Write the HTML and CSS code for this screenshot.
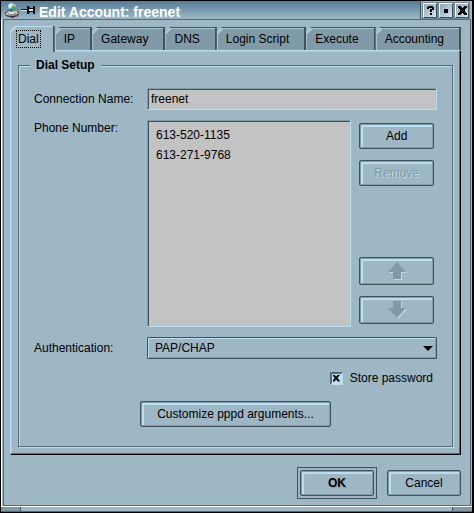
FILE: index.html
```html
<!DOCTYPE html>
<html lang="en">
<head>
    <meta charset="utf-8">
    <title>Edit Account: freenet</title>
    <link rel="stylesheet" href="styles.css">
</head>
<body>
    <div class="window">
        <header class="titlebar">
            <svg class="app-icon" width="17" height="17" viewBox="0 0 17 17" aria-hidden="true">
                <path d="M0 11L5 7L13 9L14 13L8 16L1 14Z" fill="#333"/>
                <path d="M1 11L5 8L12 9L13 12L8 14L1 13Z" fill="#c9c9c1"/>
                <path d="M2 11L7 10L12 12L7 14Z" fill="#89877f"/>
                <circle cx="7" cy="5" r="5" fill="#608fa8"/>
                <path d="M3 3L6 1L8 2L7 5L4 7Z" fill="#d8f5f5"/>
                <path d="M8 1L11 4L9 5Z" fill="#e8dd58"/>
                <path d="M7 6L11 5L10 8L7 9Z" fill="#49a55a"/>
                <path d="M4 7L7 7L7 10L4 9Z" fill="#5262ae"/>
                <path d="M3 10H9V12H5Z" fill="#e8e8e0"/>
                <path d="M10 14H13" stroke="#b84437"/>
            </svg>
            <svg class="pin" width="15" height="10" viewBox="0 0 15 10" aria-hidden="true" shape-rendering="crispEdges">
                <path d="M0 4H6V5H0ZM6 1H8V2H9V3H12V1H14V9H12V7H9V8H8V9H6Z" fill="#111"/>
                <path d="M0 5H6V6H0ZM8 4H12V6H8Z" fill="#dbe7ec"/>
            </svg>
            <h1>Edit Account: freenet</h1>
            <div class="window-buttons">
                <button type="button" aria-label="Help">
                    <svg width="9" height="9" viewBox="0 0 9 9" shape-rendering="crispEdges"><path d="M2 0H7V1H8V4H6V6H4V3H6V2H3V3H1V1H2ZM4 7H6V9H4Z"/></svg>
                </button>
                <button type="button" aria-label="Maximize">
                    <svg width="9" height="9" viewBox="0 0 9 9"><path d="M2 3H6V7H2Z"/></svg>
                </button>
                <button type="button" aria-label="Close">
                    <svg width="9" height="9" viewBox="0 0 9 9" shape-rendering="crispEdges"><path d="M0 0H3V1H4V2H5V1H6V0H9V2H8V3H7V6H8V7H9V9H6V8H5V7H4V8H3V9H0V7H1V6H2V3H1V2H0Z"/></svg>
                </button>
            </div>
        </header>

        <main class="dialog">
            <nav class="tabs" role="tablist">
                <button type="button" class="tab active" role="tab" aria-selected="true"><span>Dial</span></button>
                <button type="button" class="tab" role="tab">IP</button>
                <button type="button" class="tab" role="tab">Gateway</button>
                <button type="button" class="tab" role="tab">DNS</button>
                <button type="button" class="tab" role="tab">Login Script</button>
                <button type="button" class="tab" role="tab">Execute</button>
                <button type="button" class="tab" role="tab">Accounting</button>
            </nav>

            <form class="panel" id="accountForm">
                <fieldset>
                    <legend>Dial Setup</legend>
                    <div class="fields">
                        <label for="connectionName">Connection Name:</label>
                        <input type="text" id="connectionName" value="freenet">

                        <label for="phoneNumber" class="top-label">Phone Number:</label>
                        <div class="phone">
                            <select id="phoneNumber" class="phone-list" size="9">
                                <option>613-520-1135</option>
                                <option>613-271-9768</option>
                            </select>
                            <div class="phone-buttons">
                                <button type="button" class="btn">Add</button>
                                <button type="button" class="btn" disabled>Remove</button>
                                <button type="button" class="btn arrow up" disabled aria-label="Move up">
                                    <svg width="20" height="18" viewBox="0 0 20 18"><path d="M11 2L20 11H15V18H7V11H2Z" fill="#b9def0"/><path d="M10 0L19 10H14V17H6V10H1Z" fill="#819aa7"/></svg>
                                </button>
                                <button type="button" class="btn arrow" disabled aria-label="Move down">
                                    <svg width="20" height="18" viewBox="0 0 20 18"><path d="M7 1H15V8H20L11 18L2 8H7Z" fill="#b9def0"/><path d="M6 0H14V7H19L10 17L1 7H6Z" fill="#819aa7"/></svg>
                                </button>
                            </div>
                        </div>

                        <label for="authentication">Authentication:</label>
                        <div class="combo">
                            <select id="authentication">
                                <option>PAP/CHAP</option>
                            </select>
                        </div>
                    </div>
                    <div class="store">
                        <input type="checkbox" id="storePassword" checked>
                        <label for="storePassword">Store password</label>
                    </div>
                    <button type="button" class="btn customize">Customize pppd arguments...</button>
                </fieldset>
            </form>

            <div class="actions">
                <div class="default-frame">
                    <button type="submit" form="accountForm" class="btn ok">OK</button>
                </div>
                <button type="button" class="btn">Cancel</button>
            </div>
        </main>
        <div class="grip"><span></span><span></span></div>
    </div>
</body>
</html>
```
FILE: styles.css
```css
* {
    box-sizing: border-box;
}
body {
    margin: 0;
    background-color: #000;
    color: #000;
}
body, button, input, select {
    font-family: "Liberation Sans", Arial, sans-serif;
    font-size: 12px;
    line-height: 14px;
}
.window {
    min-height: 100vh;
    display: flex;
    flex-direction: column;
    border: 1px solid #000;
    border-right-width: 2px;
    background-color: #9db7c5;
}
.titlebar {
    display: flex;
    align-items: center;
    height: 18px;
    padding-left: 4px;
    background: linear-gradient(#547b96, #9db9c8);
}
.pin {
    margin-left: -1px;
}
.titlebar h1 {
    flex: 1;
    margin: 0 0 0 3px;
    padding-top: 3px;
    font-size: 14px;
    line-height: 16px;
    color: #fff;
}
.window-buttons {
    display: flex;
    gap: 2px;
    padding: 2px 3px 0 2px;
    height: 18px;
    border-left: 1px solid #41525c;
    background-color: #9db7c5;
}
.window-buttons button {
    display: flex;
    align-items: center;
    justify-content: center;
    width: 14px;
    height: 15px;
    padding: 0;
    border: 1px solid;
    border-color: #fff #41525c #41525c #fff;
    background: linear-gradient(135deg, #8ba6b5, #d2e6f0);
    box-shadow: 0 0 0 1px #70889a;
}
.dialog {
    flex: 1;
    margin-right: 1px;
    margin-left: 2px;
    padding: 6px 9px 6px 6px;
    border: 1px solid #526a77;
    box-shadow: -1px 0 #9db7c5, -2px 0 #fff;
}
.tabs {
    display: flex;
    align-items: flex-end;
}
.tab {
    flex: 1 0 auto;
    height: 23px;
    padding: 0 13px 0 9px;
    border: 0;
    border-top: 1px solid #41525c;
    border-right: 2px solid #41525c;
    background: linear-gradient(135deg, #a9c6d5 5px, #819aa7 5px);
    box-shadow: inset 0 1px #a9c6d5, inset 1px 0 #a9c6d5;
    clip-path: polygon(5px 0, 100% 0, 100% 100%, 0 100%, 0 5px);
    text-align: left;
}
.tab.active {
    height: 26px;
    margin-bottom: -2px;
    padding: 0 10px 0 6px;
    border-top: 0;
    background: linear-gradient(135deg, #b9def0 5px, #9db7c5 5px);
    box-shadow: inset 1px 1px #b9def0;
}
.tab.active span {
    display: inline-block;
    padding: 1px;
    border: 1px dotted #000;
}
.panel {
    padding: 7px;
    border: 1px solid;
    border-color: #b9def0 #000 #000 #b9def0;
    box-shadow: inset -1px -1px #526a77, inset 1px 1px #a9c6d5;
}
fieldset {
    min-width: 0;
    margin: 0;
    padding: 16px 15px 19px;
    border: 1px solid #526a77;
    box-shadow: 1px 1px #b9def0, inset 1px 1px #b9def0;
}
legend {
    margin-left: -4px;
    padding: 0 6px;
    background-color: #9db7c5;
    font-weight: bold;
}
.fields {
    display: grid;
    grid-template-columns: 103px 1fr;
    gap: 10px;
}
.fields > label {
    padding-top: 4px;
}
.fields > .top-label {
    padding-top: 1px;
}
input[type="text"],
.phone-list {
    border: 1px solid;
    border-color: #819aa7 #b9def0 #b9def0 #819aa7;
    border-radius: 0;
    background-color: #c3c3c3;
    box-shadow: inset 1px 1px #41525c;
    outline: none;
}
input[type="text"] {
    width: 100%;
    height: 22px;
    padding: 0 3px;
}
.phone {
    display: flex;
    gap: 8px;
}
.phone-list {
    flex: 1;
    min-width: 0;
    height: 207px;
    padding: 4px 8px;
    overflow: hidden;
}
.phone-list option {
    min-height: 20px;
    padding: 3px 0;
}
.phone-buttons {
    display: flex;
    flex-direction: column;
    gap: 11px;
    padding: 3px 3px 3px 0;
}
.btn {
    min-width: 74px;
    height: 26px;
    padding: 0 14px;
    border: 1px solid #41525c;
    border-radius: 2px;
    background-color: #9db7c5;
    color: #000;
    box-shadow: inset -1px -1px #819aa7, inset 1px 1px #819aa7, inset 3px 3px #b9def0;
}
.btn:disabled {
    color: #819aa7;
    text-shadow: 1px 1px #b9def0;
}
.arrow {
    height: 28px;
    line-height: 0;
}
.up {
    margin-top: auto;
}
.combo {
    position: relative;
}
.combo::after {
    content: "";
    position: absolute;
    top: 9px;
    right: 4px;
    border: 5px solid transparent;
    border-top-color: #000;
    border-bottom: 0;
    pointer-events: none;
}
.combo select {
    appearance: none;
    width: 100%;
    height: 22px;
    padding: 0 7px;
    border: 1px solid #41525c;
    border-radius: 1px;
    background-color: #9db7c5;
    color: #000;
    box-shadow: inset 1px 1px #b9def0, inset -1px -1px #819aa7;
}
.store {
    display: flex;
    justify-content: flex-end;
    align-items: center;
    gap: 7px;
    margin-top: 12px;
    padding-right: 4px;
}
.store input {
    appearance: none;
    display: grid;
    place-items: center;
    width: 13px;
    height: 13px;
    margin: 0;
    border: 2px solid;
    border-color: #526a77 #b9def0 #b9def0 #526a77;
    background-color: #b9def0;
}
.store input:checked::before {
    content: "";
    width: 7px;
    height: 7px;
    background-color: #000;
    clip-path: polygon(0 0, 25% 0, 50% 30%, 75% 0, 100% 0, 100% 15%, 70% 50%, 100% 85%, 100% 100%, 75% 100%, 50% 70%, 25% 100%, 0 100%, 0 85%, 30% 50%, 0 15%);
}
.customize {
    display: block;
    margin: 16px auto 0;
    padding: 0 16px;
}
.actions {
    display: flex;
    justify-content: flex-end;
    align-items: center;
    gap: 10px;
    padding-top: 12px;
}
.default-frame {
    padding: 2px;
    border: 1px solid #41525c;
}
.ok {
    font-weight: bold;
    text-shadow: 1px 1px #819aa7;
}
.grip {
    display: flex;
    justify-content: space-between;
    height: 6px;
    border-top: 1px solid #fff;
    border-bottom: 1px solid #526a77;
}
.grip span {
    width: 20px;
    background-color: #819aa7;
    border-right: 1px solid #41525c;
}
.grip span:last-child {
    border-right: 0;
    border-left: 1px solid #41525c;
}
```
